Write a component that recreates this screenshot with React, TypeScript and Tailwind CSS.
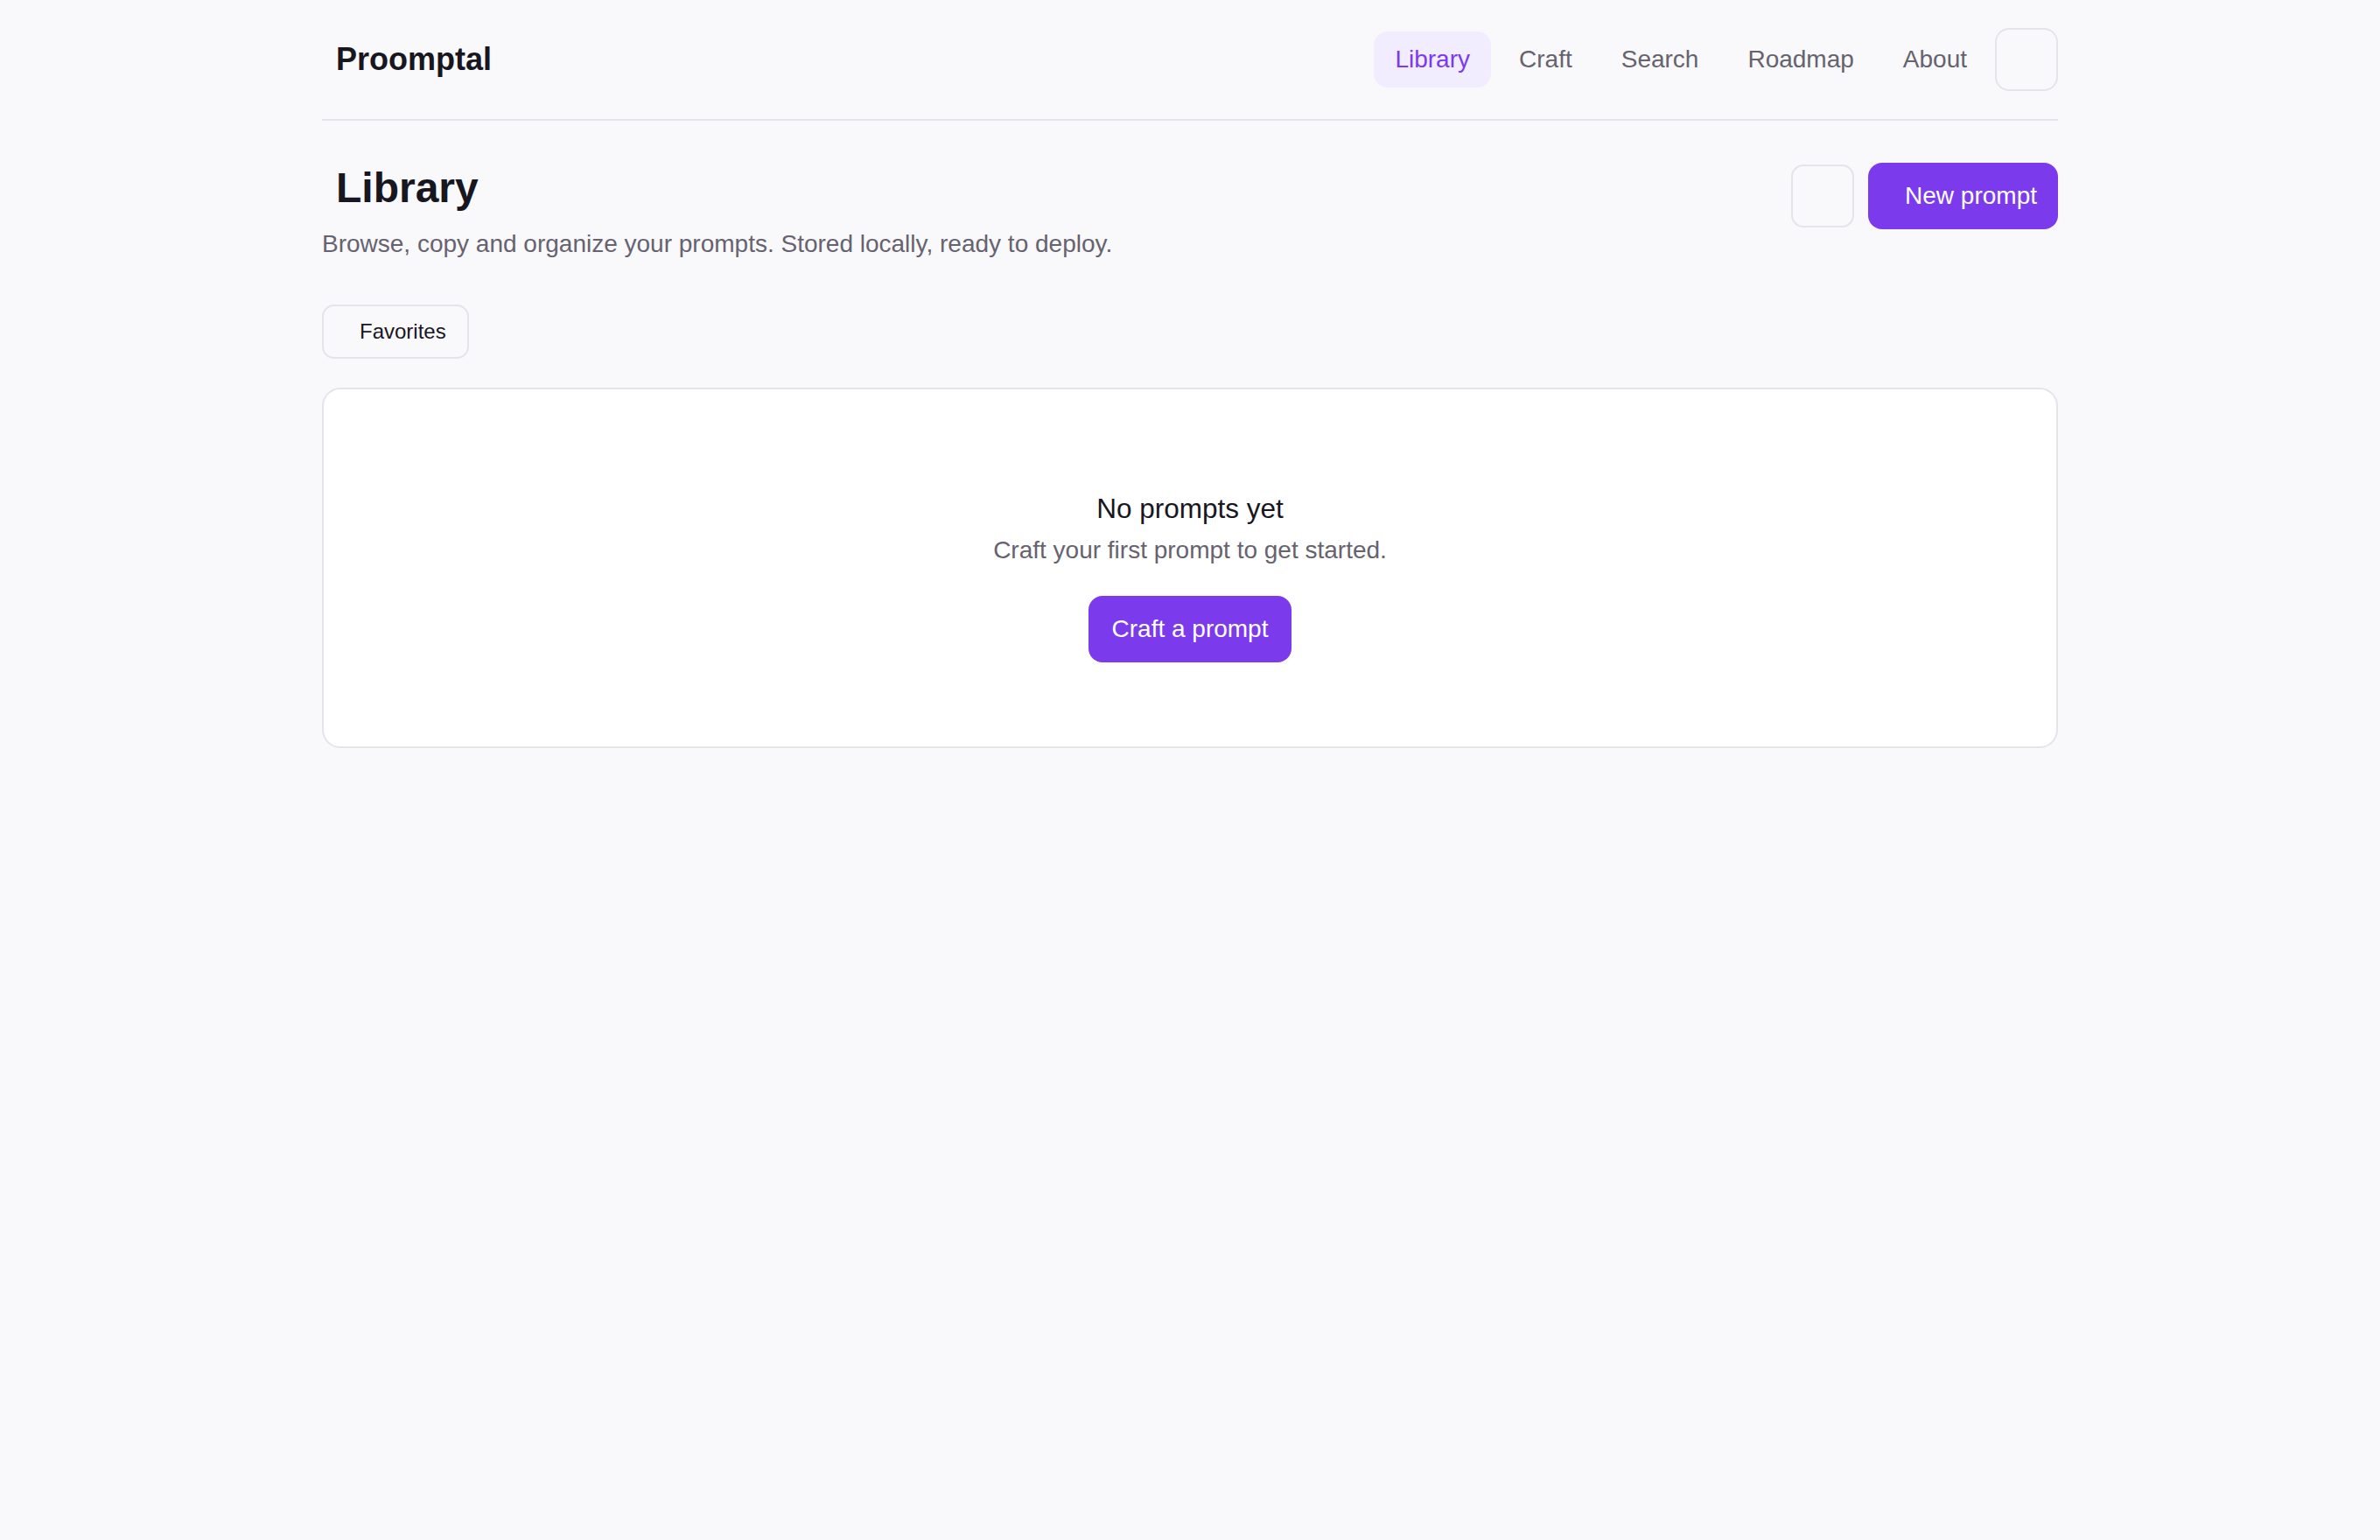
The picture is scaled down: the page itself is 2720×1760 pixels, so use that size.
import { useState } from "react";

const NAV_LINKS = ["Library", "Craft", "Search", "Roadmap", "About"];

export default function App() {
  const [active, setActive] = useState("Library");

  return (
    <div className="min-h-screen bg-[#f9f9fb] text-[#18161f]" style={{ fontFamily: "'Liberation Sans', Arial, sans-serif" }}>
      <div className="max-w-[1984px] mx-auto">
        {/* Header */}
        <header className="flex items-center justify-between py-8 border-b-2 border-[#e4e4ea]">
          <div className="pl-4 text-[36px] font-bold leading-[44px]">Proomptal</div>
          <nav className="flex items-center gap-2">
            {NAV_LINKS.map(link => (
              <button
                key={link}
                onClick={() => setActive(link)}
                className={
                  link === active
                    ? "px-6 py-3 rounded-[16px] text-[28px] leading-[40px] bg-[#f1ecfe] text-[#7c3aed]"
                    : "px-6 py-3 rounded-[16px] text-[28px] leading-[40px] text-[#67626f]"
                }
              >
                {link}
              </button>
            ))}
            <button className="w-[72px] h-[72px] rounded-[16px] border-2 border-[#e4e4ea]" />
          </nav>
        </header>

        {/* Page title */}
        <section className="pt-12">
          <div className="flex items-start justify-between">
            <div>
              <h1 className="pl-4 text-[48px] font-bold leading-[58px]">Library</h1>
              <p className="mt-[14px] text-[28px] leading-[42px] text-[#67626f]">
                Browse, copy and organize your prompts. Stored locally, ready to deploy.
              </p>
            </div>
            <div className="flex items-center gap-4">
              <button className="w-[72px] h-[72px] rounded-[14px] border-2 border-[#e4e4ea]" />
              <button className="pl-[42px] pr-6 py-[17px] rounded-[16px] bg-[#7c3aed] text-white text-[28px] leading-[42px]">
                New prompt
              </button>
            </div>
          </div>

          <button className="mt-12 pl-[41px] pr-6 py-[11px] rounded-[14px] border-2 border-[#e4e4ea] text-[24px] leading-[36px]">
            Favorites
          </button>

          {/* Empty state */}
          <div className="mt-[33px] bg-white border-2 border-[#e4e4ea] rounded-[21px] pt-[112px] pb-[96px] flex flex-col items-center">
            <h2 className="text-[31.5px] leading-[49px]">No prompts yet</h2>
            <p className="mt-[2px] text-[28px] leading-[42px] text-[#67626f]">Craft your first prompt to get started.</p>
            <button className="mt-[31px] px-[27px] py-[17px] rounded-[16px] bg-[#7c3aed] text-white text-[28px] leading-[42px]">
              Craft a prompt
            </button>
          </div>
        </section>
      </div>
    </div>
  );
}
